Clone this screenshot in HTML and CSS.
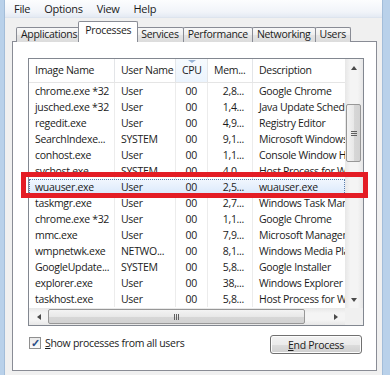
FILE: index.html
```html
<!DOCTYPE html>
<html>

<head>
    <meta charset="utf-8">
    <title>Windows Task Manager</title>
    <link rel="stylesheet" href="styles.css">
</head>

<body>
    <div class="window">
        <div class="menubar">
            <span>File</span>
            <span>Options</span>
            <span>View</span>
            <span>Help</span>
        </div>
        <div class="tabs">
            <div class="tab">Applications</div>
            <div class="tab active">Processes</div>
            <div class="tab">Services</div>
            <div class="tab">Performance</div>
            <div class="tab">Networking</div>
            <div class="tab">Users</div>
        </div>
        <div class="panel">
            <div class="list">
                <div class="list-main">
                    <div class="cols">
                        <div class="row header">
                            <div class="c-name">Image Name</div>
                            <div class="c-user">User Name</div>
                            <div class="c-cpu sorted">CPU<span class="sort-arrow"></span></div>
                            <div class="c-mem">Mem...</div>
                            <div class="c-desc">Description</div>
                        </div>
                        <div class="rows">
                            <div class="row"><div class="c-name">chrome.exe *32</div><div class="c-user">User</div><div class="c-cpu">00</div><div class="c-mem">2,8...</div><div class="c-desc">Google Chrome</div></div>
                            <div class="row"><div class="c-name">jusched.exe *32</div><div class="c-user">User</div><div class="c-cpu">00</div><div class="c-mem">1,4...</div><div class="c-desc">Java Update Scheduler</div></div>
                            <div class="row"><div class="c-name">regedit.exe</div><div class="c-user">User</div><div class="c-cpu">00</div><div class="c-mem">4,9...</div><div class="c-desc">Registry Editor</div></div>
                            <div class="row"><div class="c-name">SearchIndexe...</div><div class="c-user">SYSTEM</div><div class="c-cpu">00</div><div class="c-mem">9,1...</div><div class="c-desc">Microsoft Windows Search</div></div>
                            <div class="row"><div class="c-name">conhost.exe</div><div class="c-user">User</div><div class="c-cpu">00</div><div class="c-mem">1,1...</div><div class="c-desc">Console Window Host</div></div>
                            <div class="row"><div class="c-name">svchost.exe</div><div class="c-user">SYSTEM</div><div class="c-cpu">00</div><div class="c-mem">4,0...</div><div class="c-desc">Host Process for Windows</div></div>
                            <div class="row selected"><div class="c-name">wuauser.exe</div><div class="c-user">User</div><div class="c-cpu">00</div><div class="c-mem">2,5...</div><div class="c-desc">wuauser.exe</div></div>
                            <div class="row"><div class="c-name">taskmgr.exe</div><div class="c-user">User</div><div class="c-cpu">00</div><div class="c-mem">2,7...</div><div class="c-desc">Windows Task Manager</div></div>
                            <div class="row"><div class="c-name">chrome.exe *32</div><div class="c-user">User</div><div class="c-cpu">00</div><div class="c-mem">1,1...</div><div class="c-desc">Google Chrome</div></div>
                            <div class="row"><div class="c-name">mmc.exe</div><div class="c-user">User</div><div class="c-cpu">00</div><div class="c-mem">7,9...</div><div class="c-desc">Microsoft Management Console</div></div>
                            <div class="row"><div class="c-name">wmpnetwk.exe</div><div class="c-user">NETWO...</div><div class="c-cpu">00</div><div class="c-mem">8,1...</div><div class="c-desc">Windows Media Player Network</div></div>
                            <div class="row"><div class="c-name">GoogleUpdate...</div><div class="c-user">SYSTEM</div><div class="c-cpu">00</div><div class="c-mem">5,8...</div><div class="c-desc">Google Installer</div></div>
                            <div class="row"><div class="c-name">explorer.exe</div><div class="c-user">User</div><div class="c-cpu">00</div><div class="c-mem">38,...</div><div class="c-desc">Windows Explorer</div></div>
                            <div class="row"><div class="c-name">taskhost.exe</div><div class="c-user">User</div><div class="c-cpu">00</div><div class="c-mem">5,8...</div><div class="c-desc">Host Process for Windows Tasks</div></div>
                        </div>
                    </div>
                    <div class="vscroll">
                        <div class="sb-btn"><span class="arrow up"></span></div>
                        <div class="sb-track vertical">
                            <div class="sb-thumb v-thumb"><span class="grip-v"></span></div>
                        </div>
                        <div class="sb-btn"><span class="arrow down"></span></div>
                    </div>
                </div>
                <div class="hscroll-row">
                    <div class="hscroll">
                        <div class="sb-btn"><span class="arrow left"></span></div>
                        <div class="sb-track horizontal">
                            <div class="sb-thumb h-thumb"><span class="grip-h"></span></div>
                        </div>
                        <div class="sb-btn"><span class="arrow right"></span></div>
                    </div>
                    <div class="corner"></div>
                </div>
                <div class="marker"></div>
            </div>
            <div class="footer">
                <label class="check">
                    <span class="box">&#10003;</span>
                    <span><u>S</u>how processes from all users</span>
                </label>
                <button class="btn"><u>E</u>nd Process</button>
            </div>
        </div>
    </div>
</body>

</html>
```

FILE: styles.css
```css
* {
    box-sizing: border-box;
    --frame: #b9d1ea;
    --border: #898c95;
    --text: #1b1b1b;
    --grid: #ececec;
    --mark: #e41d25;
}

body {
    margin: 0;
    background-color: var(--frame);
    font-family: "Open Sans", "Noto Sans", sans-serif;
    font-size: 10.5px;
    letter-spacing: -0.3px;
    color: var(--text);
    overflow: hidden;
}

.window {
    margin: 0 7px 0 4px;
    height: 375px;
    background-color: #f0f0f0;
    border-left: 1px solid #a3bdd9;
    border-right: 1px solid #a3bdd9;
}

/* menu */

.menubar {
    display: flex;
    height: 18px;
    padding-left: 4px;
    align-items: center;
    background: linear-gradient(#fcfdfe, #f1f4f9 70%, #e4eaf3);
    border-bottom: 1px solid #dde4ee;
}

.menubar span {
    padding: 0 7px 0 5px;
    margin-right: 2px;
    font-size: 11px;
}

/* tabs */

.tabs {
    display: flex;
    align-items: flex-end;
    height: 24px;
    padding-left: 11px;
    position: relative;
    z-index: 1;
}

.tab {
    height: 15px;
    padding: 0 4px;
    margin-right: -1px;
    line-height: 13px;
    border: 1px solid var(--border);
    border-bottom: none;
    border-radius: 2px 2px 0 0;
    background: linear-gradient(#f8f8f8, #eeeeee 50%, #e4e4e4 51%, #dcdcdc);
    white-space: nowrap;
}

.tab.active {
    height: 21px;
    line-height: 17px;
    padding: 0 6px;
    margin: 0 -1px 0 -3px;
    background: #fff;
    position: relative;
    z-index: 2;
}

.tab.active + .tab {
    margin-left: -1px;
}

/* panel */

.panel {
    margin: -1px 5px 0 7px;
    height: 330px;
    padding: 16px 12px 0 15px;
    background-color: #fff;
    border: 1px solid var(--border);
}

.list {
    position: relative;
    border: 1px solid #828790;
}

.list-main {
    display: flex;
}

.cols {
    width: 316px;
    overflow: hidden;
}

.row {
    display: grid;
    grid-template-columns: 86px 61px 32px 45px 92px;
    height: 16px;
    line-height: 16px;
}

.row > div {
    padding-left: 6px;
    white-space: nowrap;
    overflow: hidden;
    border-right: 1px solid var(--grid);
}

.row .c-cpu,
.row .c-mem {
    text-align: right;
    padding-right: 8px;
}

.row .c-cpu {
    padding-right: 10px;
}

.row .c-desc {
    border-right: none;
}

.header {
    height: 24px;
    line-height: 23px;
    border-bottom: 1px solid #e5e5e5;
}

.header > div {
    border-right: 1px solid #e3e5e8;
    position: relative;
}

.header .c-cpu {
    text-align: left;
    padding-left: 6px;
}

.header .sorted {
    background: linear-gradient(#f6fafe, #ecf4fd);
}

.sort-arrow {
    position: absolute;
    top: 1px;
    left: 12px;
    border-left: 4px solid transparent;
    border-right: 4px solid transparent;
    border-top: 3px solid #97b4d6;
}

.rows {
    height: 225px;
}

.row.selected {
    background: linear-gradient(#f2f7fe, #d9e8fb);
    outline: 1px dotted #5a7cab;
    outline-offset: -1px;
}

.row.selected > div {
    border-right-color: transparent;
}

/* scrollbars */

.vscroll {
    width: 18px;
    display: flex;
    flex-direction: column;
    background: linear-gradient(90deg, #e7e7e7, #f4f4f4 30%, #f4f4f4 70%, #e7e7e7);
}

.sb-btn {
    width: 17px;
    height: 17px;
    display: flex;
    align-items: center;
    justify-content: center;
    flex-shrink: 0;
}

.sb-track {
    flex: 1;
    display: flex;
}

.sb-track.vertical {
    flex-direction: column;
    padding-top: 28px;
}

.sb-thumb {
    border: 1px solid #979797;
    border-radius: 2px;
    display: flex;
    align-items: center;
    justify-content: center;
}

.v-thumb {
    height: 58px;
    width: 15px;
    margin-left: 1px;
    background: linear-gradient(90deg, #f3f3f3, #e8e8e8 50%, #d7d7d7 51%, #d2d2d2);
}

.grip-v {
    width: 6px;
    height: 5px;
    border-top: 1px solid #5f5f5f;
    border-bottom: 1px solid #5f5f5f;
    position: relative;
}

.grip-v::after {
    content: "";
    position: absolute;
    left: 0;
    right: 0;
    top: 1px;
    border-top: 1px solid #5f5f5f;
}

.arrow {
    width: 0;
    height: 0;
    border: 3px solid transparent;
}

.arrow.up {
    border-bottom: 4px solid #4a4a4a;
    border-top: none;
}

.arrow.down {
    border-top: 4px solid #4a4a4a;
    border-bottom: none;
}

.arrow.left {
    border-right: 4px solid #4a4a4a;
    border-left: none;
}

.arrow.right {
    border-left: 4px solid #4a4a4a;
    border-right: none;
}

.hscroll-row {
    display: flex;
    height: 17px;
}

.hscroll {
    width: 316px;
    display: flex;
    background: linear-gradient(#e7e7e7, #f4f4f4 30%, #f4f4f4 70%, #e7e7e7);
}

.hscroll .sb-btn {
    width: 19px;
}

.sb-track.horizontal {
    align-items: center;
    padding-left: 0;
}

.h-thumb {
    width: 257px;
    height: 15px;
    background: linear-gradient(#f3f3f3, #e8e8e8 50%, #d7d7d7 51%, #d2d2d2);
}

.grip-h {
    width: 5px;
    height: 6px;
    border-left: 1px solid #5f5f5f;
    border-right: 1px solid #5f5f5f;
    position: relative;
}

.grip-h::after {
    content: "";
    position: absolute;
    top: 0;
    bottom: 0;
    left: 1px;
    border-left: 1px solid #5f5f5f;
}

.corner {
    flex: 1;
    background-color: #f0f0f0;
}

.marker {
    position: absolute;
    left: -8px;
    top: 113px;
    right: -5px;
    height: 26px;
    border: 5px solid var(--mark);
}

/* footer */

.footer {
    display: flex;
    justify-content: space-between;
    align-items: flex-start;
    padding: 9px 2px 0 1px;
}

.check {
    display: flex;
    align-items: center;
    gap: 4px;
    margin-top: 1px;
}

.box {
    width: 12px;
    height: 12px;
    border: 1px solid #8f8f8f;
    background: linear-gradient(#eaeaea, #fbfbfb);
    color: #2b4c86;
    font-size: 11px;
    line-height: 10px;
    text-align: center;
    font-weight: bold;
}

.btn {
    width: 92px;
    height: 19px;
    padding: 0;
    font: inherit;
    letter-spacing: inherit;
    color: var(--text);
    border: 1px solid #707070;
    border-radius: 3px;
    background: linear-gradient(#f2f2f2, #ebebeb 50%, #dddddd 51%, #cfcfcf);
    box-shadow: inset 0 0 0 1px #fcfcfc;
}
```
